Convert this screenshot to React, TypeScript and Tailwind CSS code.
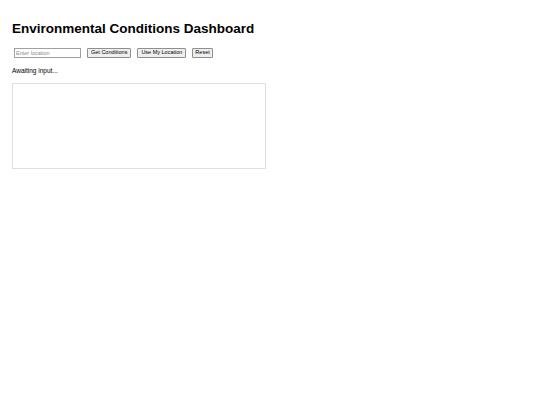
export default function App() {
  return (
    <div className="min-h-[405px] bg-white px-[12px] pt-[15px] text-black" style={{ fontFamily: '"Liberation Sans", Arial, sans-serif' }}>
      <h1 className="text-[13.5px] font-bold leading-[28px]">Environmental Conditions Dashboard</h1>
      <div className="mt-[5px] flex items-center gap-[6px] pl-[2px]">
        <input
          placeholder="Enter location"
          className="h-[10px] w-[67px] border border-[#a0a0a0] px-[1px] text-[5.5px] placeholder:text-[#8a8a8a] outline-none"
        />
        <button className="h-[10px] border border-[#8f8f8f] bg-[#efefef] px-[3px] text-[5.5px] leading-none rounded-[1px]">Get Conditions</button>
        <button className="h-[10px] border border-[#8f8f8f] bg-[#efefef] px-[3px] text-[5.5px] leading-none rounded-[1px]">Use My Location</button>
        <button className="h-[10px] border border-[#8f8f8f] bg-[#efefef] px-[2px] text-[5.5px] leading-none rounded-[1px]">Reset</button>
      </div>
      <p className="mt-[8px] text-[6.5px] leading-[10px]">Awaiting input...</p>
      <div className="mt-[7px] h-[86px] w-[254px] border border-[#e0e0e0]"></div>
    </div>
  );
}
